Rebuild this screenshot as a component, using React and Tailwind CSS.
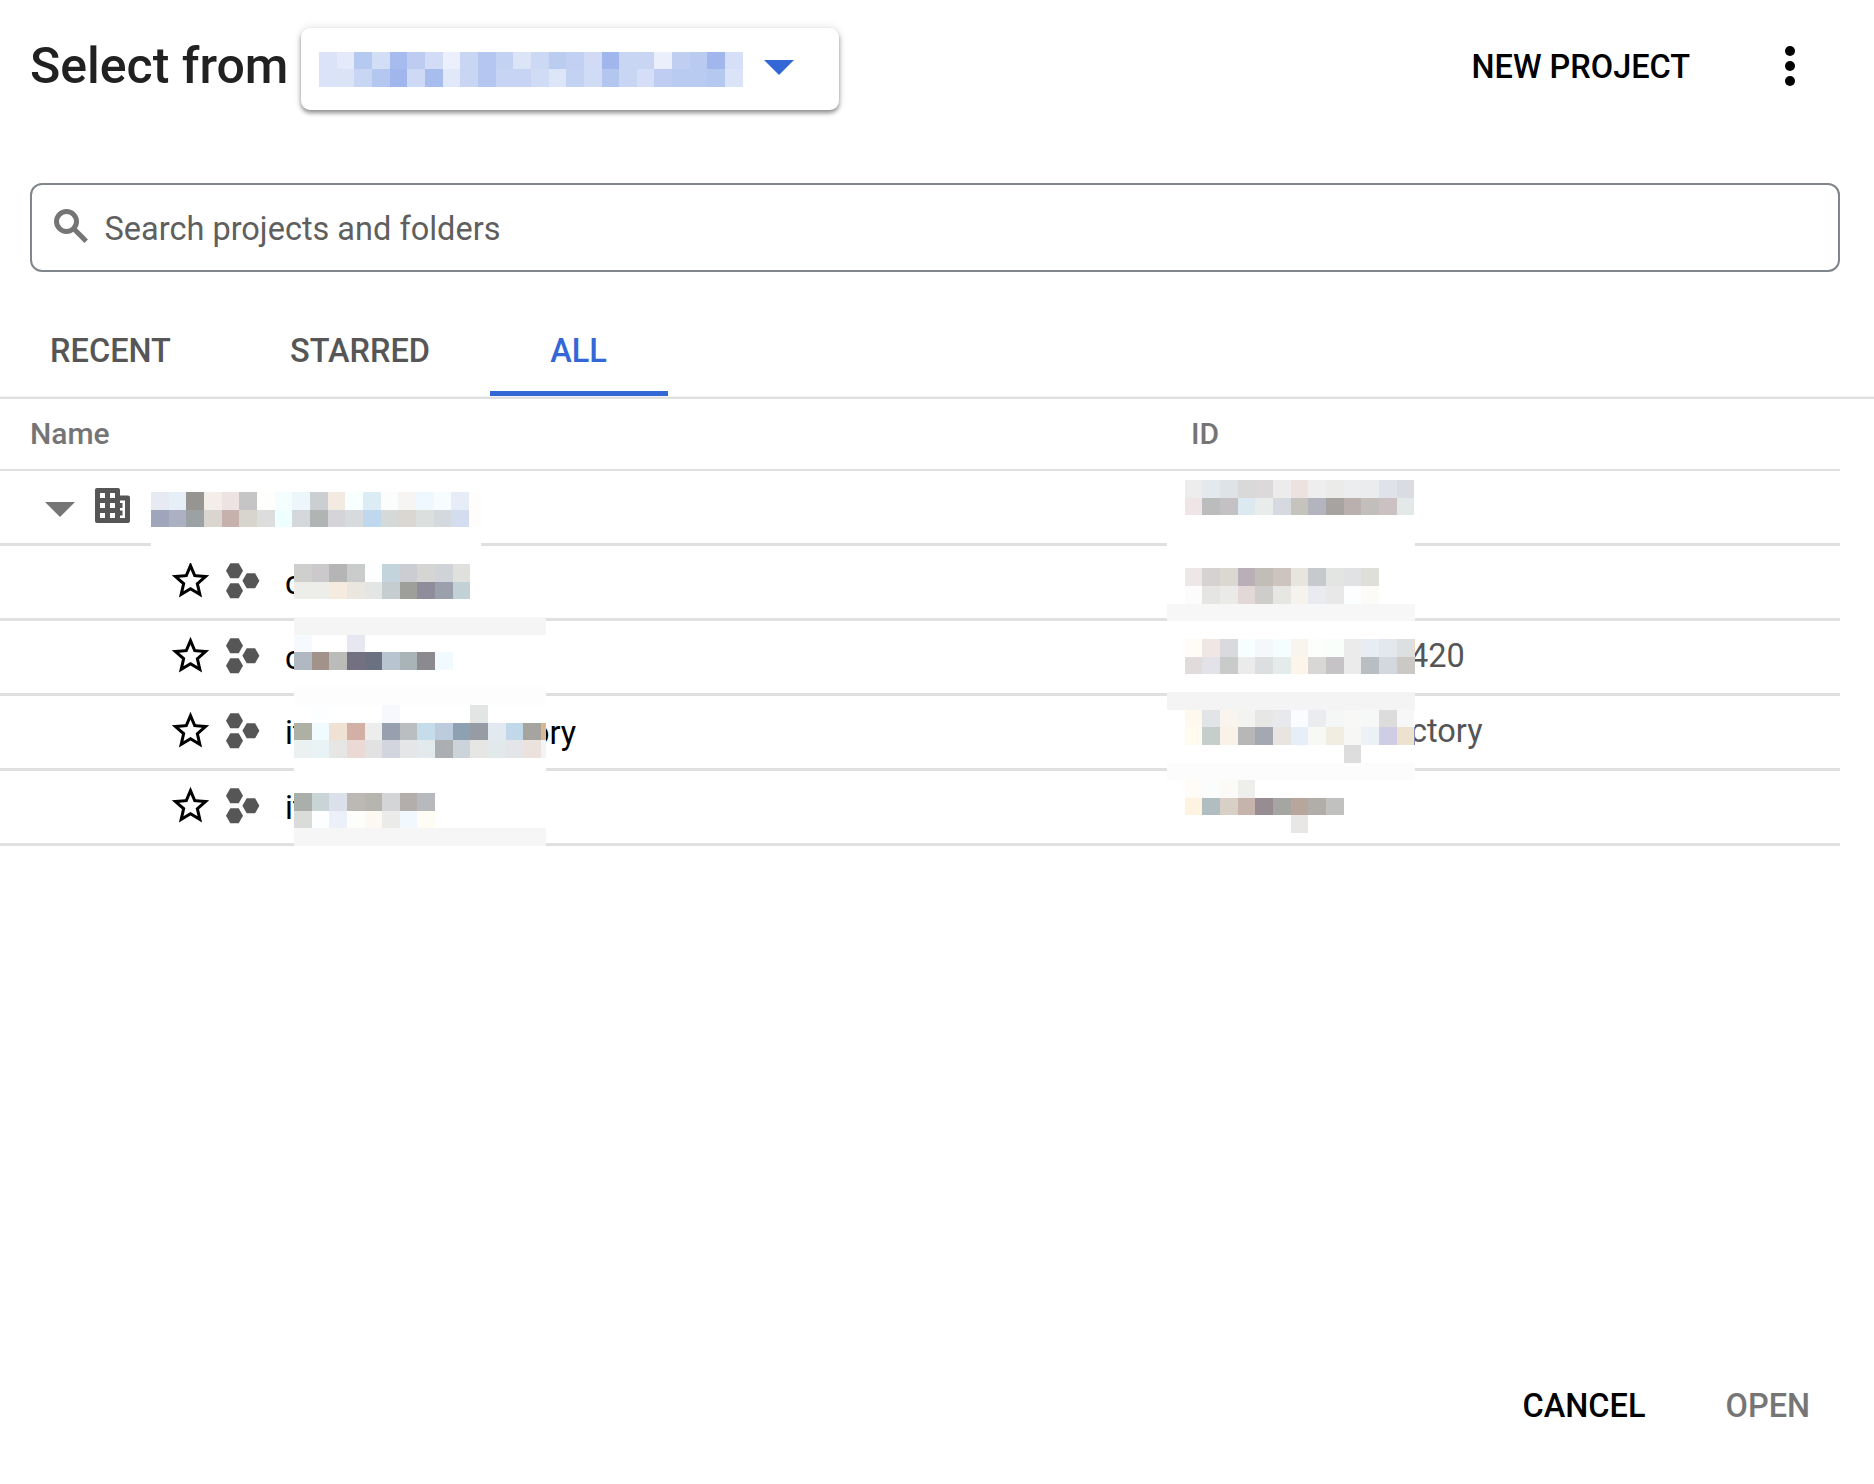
import React from "react";

const ACCOUNT = [
  "dbe3f8 e4eafa b5c9f1 d2ddf6 a7bcee bdccf0 d3dcf6 ebf0fc c8d6f4 b5c6f0 c3d2f3 dce4f8 ccd9f5 bbccf1 c1d0f3 d1dbf6 a0b6ec c8d6f4 c8d6f4 ebeffb c0cef2 bacbf1 a0b6ec d5dff7",
  "dbe3f8 dbe3f6 c8d6f3 b3c7f0 a0b6ec ced9f5 a7bdee e0e8f9 c8d6f4 b5c6f0 c7d4f3 c7d4f3 d0dbf5 dde6f9 c3d2f3 d0dbf6 b2c6f0 c8d6f4 d4def7 c0cdf2 bacbf1 bacbf1 b4c8f0 dae3f8",
];

const ORG = [
  "e7eaf3 e6eff7 969592 f3eee8 ede3e2 c5c5c5 fefefc f4feff edf6fa cbcfd1 f3eae1 f8ffff dbecf5 fafdfc f7f5f4 eff8ff f7fdff e6edf6 fefdfb",
  "9fa5bb abb1c2 9ca2a3 dad5cf c6b1ac d8d5ce dddddd eeffff d4d8db b0b4b2 d5d4d9 d8dbde c0d8ed d5dad9 dad6d2 dbdfdd d3d9dc d4ddef fefdfb",
  ".",
  ".",
];

const NAMES = [
  "cfcfce cbc9cb b5b5b5 cacccb fcfeff c3d4dc cccdd3 d5d5d4 d0d4d8 e0e0dc",
  "edeeea edeeea f5ebdf eae7e0 e4e6e6 c5cdd0 9e9e9b 8f8d9b 9ba1ac c2d1d5",
  ".",
  "f5f5f5*15",
  "f6faff . . e7e7f1",
  "b0b8c1 a3928a bbbbb9 737081 6b7180 b8c4d0 a8b4b8 8b8a8f f1faff",
  ".",
  "fdfdfd*15",
  ". fcfeff . . . f7f8fd . . . . e2e5e4",
  "aeb0a4 effbfe efe1d3 d3b0a5 ededee 989fae babec1 c5dcea bccbdd 8da1b3 979ba3 e2e9f0 c0d8e9 a5a49f d9b793",
  "ebf0f1 e9f2f5 e6e7e5 ead9d5 e2e2e3 d2d5dd e5e6e8 e2eaee acafb2 ccd3da e6e6e5 e2e9eb e4e5e8 ebe2dd f1f4f7",
  ".",
  ".",
  "abafac c9d4d6 dce0eb bcb8b3 b6b5af d4d5d6 b3aeab b8b9bd",
  "dadcda fcfeff ecf0f9 fdfdfb fdf9f2 ebebe9 f1f8fe fffcf5",
  "f6f6f6*15",
];

const IDS = [
  ". ededed e4e9ed dfe3e6 d9d9d9 dbd9da ececec ede2df eeeeee ebebe9 ebedee ebecee dfe2e8 dbdce1",
  ". efe5e6 babdbb c4c1c5 dde9f0 eaeceb d7d9e0 c5c4bc b3b4be a7a3a1 bab0ae c2bebc cbc0c2 e3e8e8",
  ".",
  ".",
  ".",
  ". ede7e8 d5d2d1 dad8d1 b9afb6 c2bdb6 cdc4bd e8e4de c6cacd e3e5e3 e0e2e4 dfdfda",
  ". fcfcfc e5e5e3 eaeae8 e2d8d8 cfcdcb e6e6e2 f6f3ee e9ebf0 e8e8e8 fcfeff fcfbf7",
  "f7f7f7*15",
  ".",
  ". fffbf6 f0e7e2 d9dade f8fdff f4f8fb f5fdff f9f5ee fcfefb fafefa ebebec e7edf2 e4e7ee dedfe1 f0d8c8",
  ". e2dbdb e2e2e8 c8cbc9 ebebec dddee0 e3ecea fdf4ea d8d7d5 c5c3c5 ebebec b8bec1 d2d8dd ccc8c3 ccc8c3",
  ".",
  "f4f4f4*15",
  ". fff8ee e2e5e7 faf4ee f3f3f1 e7e7e5 e7e9ec fafcff ebecef f5f7f6 f8f8f6 f6f8f7 dcdcdd f7f7f7",
  ". fffbef c6cecc fbf2e7 b7b7b7 a3a8b3 e8e4e0 e6eff7 f8f8f4 f2ede1 f7f7f5 ebf1f5 cecde5 ede2ce 8b8bb5",
  ". . . . . . . . . . dddddd",
  "fcfcfc*15",
  ". fffcf7 fafdfc fbfaf6 eeeeed",
  ". fdf3e0 b1bec1 d8cfc7 c5b3ac 978c91 a5a6a1 b8a59b b1aea9 c1c1bf",
  ". . . . . . . e8e7e6",
];

function expand(row) {
  const [value, count] = row.split("*");
  return count ? Array(Number(count)).fill(value) : row.split(" ");
}

function Mosaic({ rows, className, cell = "w-[17.67px]" }) {
  return (
    <div aria-hidden="true" className={"flex flex-col overflow-hidden bg-white " + className}>
      {rows.map((row, r) => (
        <div key={r} className="flex min-h-0 flex-1">
          {expand(row).map((c, i) => (
            <span
              key={i}
              className={"shrink-0 " + cell}
              style={{ backgroundColor: c === "." ? "#ffffff" : "#" + c }}
            />
          ))}
        </div>
      ))}
    </div>
  );
}

function Star() {
  return (
    <svg viewBox="0 0 24 24" className="size-[45px] fill-black">
      <path d="M22 9.24l-7.19-.62L12 2 9.19 8.63 2 9.24l5.46 4.73L5.82 21 12 17.27 18.18 21l-1.63-7.03L22 9.24zM12 15.4l-3.76 2.27 1-4.28-3.32-2.88 4.38-.38L12 6.1l1.71 4.04 4.38.38-3.32 2.88 1 4.28L12 15.4z" />
    </svg>
  );
}

function ProjectIcon() {
  return (
    <svg viewBox="0 0 34 36" className="h-[36px] w-[34px] fill-[#565656]">
      <path d="M4.3.2h8.4L17 7.7l-4.3 7.5H4.3L0 7.7z" />
      <path d="M20.7 10.2h8.4l4.3 7.5-4.3 7.5h-8.4l-4.3-7.5z" />
      <path d="M4.3 20.2h8.4l4.3 7.5-4.3 7.5H4.3L0 27.7z" />
    </svg>
  );
}

function OrgIcon() {
  return (
    <svg viewBox="0 0 35 35" className="h-[35px] w-[35px]">
      <rect x="0" y="0" width="25" height="35" rx="2" fill="#565656" />
      <rect x="20" y="7.5" width="15" height="27.5" rx="2" fill="#565656" />
      <path fill="#fff" d="M5 5h5v5H5zM15 5h5v5h-5zM5 15h5v5H5zM15 15h5v5h-5zM5 25h5v5H5zM15 25h5v5h-5zM25 12.5h5V30h-5v-2.5h2.5v-5H25V20h2.5v-5H25z" />
    </svg>
  );
}

function ProjectRow({ name, tail, id }) {
  return (
    <div className="flex h-[75px] items-center border-b-[3px] border-[#e0e0e0] pl-[168px]">
      <div className="mb-[3px]"><Star /></div>
      <div className="mb-[3px] ml-[13px] flex"><ProjectIcon /></div>
      <div className="ml-[25px] flex w-[902px] pt-[2px] text-black">
        <span className="w-[246px]">{name}</span>
        <span>{tail}</span>
      </div>
      <div className="w-[300px] pb-[2px] text-[#555]">
        <span className="ml-[223px]">{id}</span>
      </div>
    </div>
  );
}

export default function App() {
  return (
    <div className="flex h-[1484px] w-full flex-col overflow-hidden bg-white font-['Roboto',sans-serif] text-[32.5px] leading-[40px]">
      <header className="flex h-[183px] items-start pt-[28px] pl-[30px]">
        <h1 className="mt-[8px] w-[271px] text-[50px] leading-[60px] font-medium whitespace-nowrap text-[#212121]">Select from</h1>
        <button className="flex h-[82px] w-[538px] items-center rounded-[9px] bg-white pl-[18px] shadow-[0_3px_4px_rgba(0,0,0,0.4),0_0_10px_rgba(0,0,0,0.12)]">
          <Mosaic rows={ACCOUNT} className="h-[35px] w-[424px]" />
          <svg viewBox="0 0 30 15" className="mb-[3px] ml-[21px] h-[15px] w-[30px] fill-[#3367d6]"><path d="M0 0h30L15 15z" /></svg>
        </button>
        <button className="mt-[19px] ml-[632.5px] w-[221.5px] text-left font-medium whitespace-nowrap text-black">NEW PROJECT</button>
        <svg viewBox="0 0 24 24" className="mt-[8px] ml-[67px] size-[60px] fill-black">
          <circle cx="12" cy="6" r="2" /><circle cx="12" cy="12" r="2" /><circle cx="12" cy="18" r="2" />
        </svg>
      </header>

      <div className="ml-[30px] flex h-[89px] w-[1810px] shrink-0 items-center rounded-[12px] border-2 border-[#80868b] pl-[22px]">
        <svg viewBox="0 0 34 34" className="mb-[3px] size-[34px] fill-none stroke-[#757575] stroke-[5]">
          <circle cx="12.5" cy="12.5" r="10" />
          <path d="M19 19l13.2 13.2" />
        </svg>
        <span className="mt-[2px] ml-[16.5px] text-[#5f5f5f]">Search projects and folders</span>
      </div>

      <nav className="mt-[34px] -ml-[10px] flex h-[90px] shrink-0 font-medium text-[#565656]">
        <div className="flex w-[240px] justify-center pt-[25px] pl-[1px]">RECENT</div>
        <div className="flex w-[260px] justify-center pt-[25px]">STARRED</div>
        <div className="flex w-[178px] justify-center border-b-[5px] border-[#3367d6] pt-[25px] pr-[1px] text-[#3367d6]">ALL</div>
      </nav>
      <div className="h-[3px] shrink-0 border-b-2 border-[#e0e0e0] bg-[#f1f1f1]" />

      <section className="relative w-[1840px]">
        <div className="flex h-[72px] items-center border-b-2 border-[#e0e0e0] pl-[30px] text-[30px] font-medium text-[#757575]">
          <span className="w-[1161px]">Name</span>
          <span>ID</span>
        </div>
        <div className="flex h-[75px] items-center border-b-[3px] border-[#e0e0e0] pl-[45px]">
          <svg viewBox="0 0 30 15" className="mt-[4px] h-[15px] w-[30px] fill-[#757575]"><path d="M0 0h30L15 15z" /></svg>
          <div className="mb-[3px] ml-[20px]"><OrgIcon /></div>
        </div>
        <ProjectRow name="c" />
        <ProjectRow name="c" id="420" />
        <ProjectRow name="it" tail="ory" id="ctory" />
        <ProjectRow name="it" />
        <Mosaic rows={ORG} className="absolute top-[93px] left-[151px] h-[70.6px] w-[330px]" />
        <Mosaic rows={NAMES} cell="w-[17.64px]" className="absolute top-[165px] left-[294px] h-[282px] w-[252px]" />
        <Mosaic rows={IDS} cell="w-[17.66px]" className="absolute top-[81px] left-[1167px] h-[353px] w-[248px]" />
      </section>

      <footer className="mt-auto mb-[58px] flex font-medium">
        <button className="ml-[1522.5px] w-[203px] text-left text-black">CANCEL</button>
        <button className="text-left text-[#757575]">OPEN</button>
      </footer>
    </div>
  );
}
